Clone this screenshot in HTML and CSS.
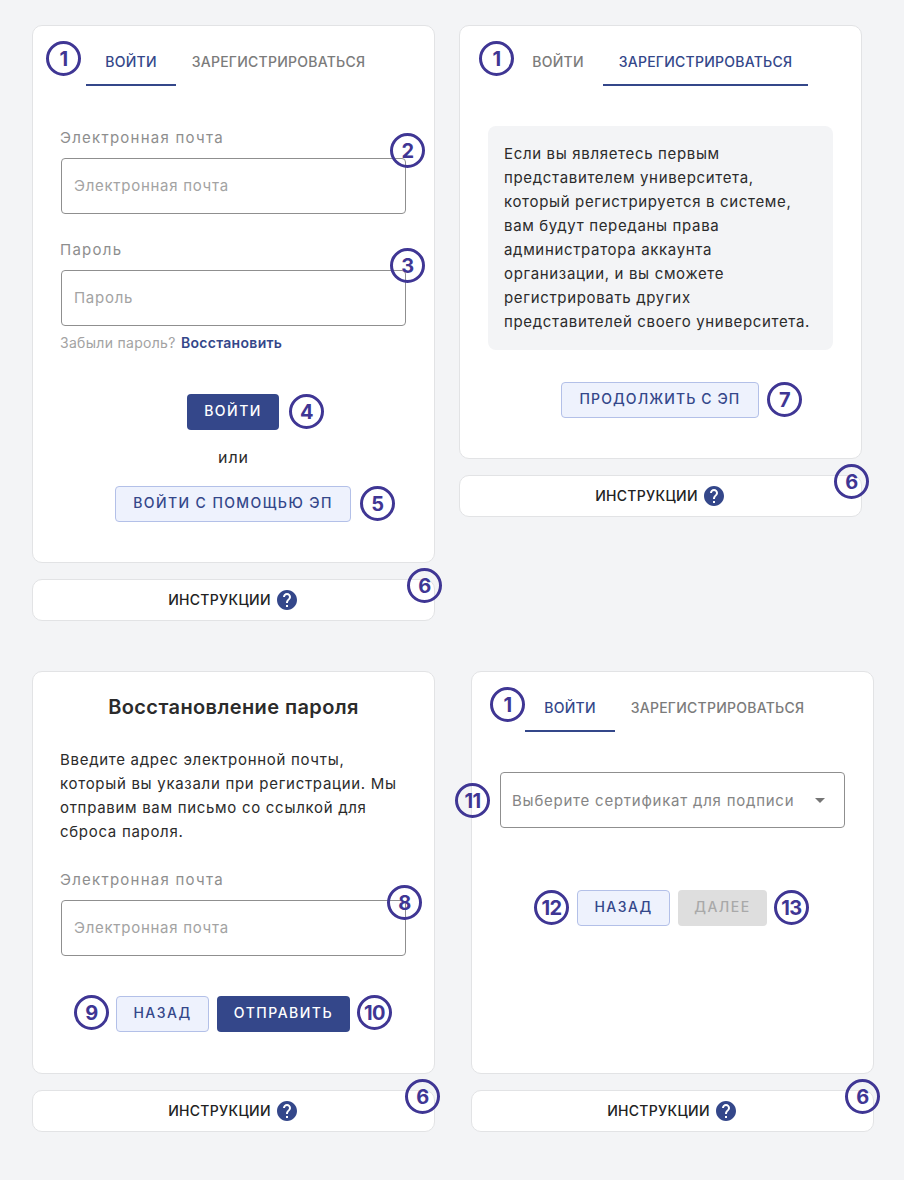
FILE: index.html
```html
<!DOCTYPE html>
<html lang="ru">
<head>
    <meta charset="UTF-8" />
    <meta name="viewport" content="width=device-width, initial-scale=1.0" />
    <title>Вход</title>
    <link rel="stylesheet" href="styles.css">
</head>
<body>
    <div class="sheet">
        <div class="row row-top">
            <div class="panel">
                <div class="card">
                    <div class="tabs">
                        <span class="tab tab-login active">Войти</span>
                        <span class="tab tab-register">Зарегистрироваться</span>
                    </div>
                    <form class="form form-login">
                        <label class="label">Электронная почта</label>
                        <input class="input" type="text" placeholder="Электронная почта">
                        <label class="label label-next">Пароль</label>
                        <input class="input" type="text" placeholder="Пароль">
                        <p class="forgot">Забыли пароль? <a class="forgot-link">Восстановить</a></p>
                        <div class="actions actions-login">
                            <button class="btn btn-primary btn-login" type="button">Войти</button>
                        </div>
                        <p class="or">или</p>
                        <div class="actions">
                            <button class="btn btn-soft btn-sign" type="button">Войти с помощью ЭП</button>
                        </div>
                    </form>
                </div>
                <div class="help"><span class="help-text">Инструкции</span>
                    <svg class="help-icon" viewBox="0 0 24 24"><path d="M12 2C6.48 2 2 6.48 2 12s4.48 10 10 10 10-4.48 10-10S17.52 2 12 2zm1 17h-2v-2h2v2zm2.07-7.75l-.9.92C13.45 12.9 13 13.5 13 15h-2v-.5c0-1.1.45-2.1 1.17-2.83l1.24-1.26c.37-.36.59-.86.59-1.41 0-1.1-.9-2-2-2s-2 .9-2 2H8c0-2.21 1.79-4 4-4s4 1.79 4 4c0 .88-.36 1.68-.93 2.25z"/></svg>
                </div>
                <span class="badge a1">1</span>
                <span class="badge a2">2</span>
                <span class="badge a3">3</span>
                <span class="badge a4">4</span>
                <span class="badge a5">5</span>
                <span class="badge a6">6</span>
            </div>

            <div class="panel">
                <div class="card">
                    <div class="tabs">
                        <span class="tab tab-login">Войти</span>
                        <span class="tab tab-register active">Зарегистрироваться</span>
                    </div>
                    <div class="form form-register">
                        <p class="note">Если вы являетесь первым<br>представителем университета,<br>который регистрируется в системе,<br>вам будут переданы права<br>администратора аккаунта<br>организации, и вы сможете<br>регистрировать других<br>представителей своего университета.</p>
                        <div class="actions actions-register">
                            <button class="btn btn-soft btn-continue" type="button">Продолжить с ЭП</button>
                        </div>
                    </div>
                </div>
                <div class="help"><span class="help-text">Инструкции</span>
                    <svg class="help-icon" viewBox="0 0 24 24"><path d="M12 2C6.48 2 2 6.48 2 12s4.48 10 10 10 10-4.48 10-10S17.52 2 12 2zm1 17h-2v-2h2v2zm2.07-7.75l-.9.92C13.45 12.9 13 13.5 13 15h-2v-.5c0-1.1.45-2.1 1.17-2.83l1.24-1.26c.37-.36.59-.86.59-1.41 0-1.1-.9-2-2-2s-2 .9-2 2H8c0-2.21 1.79-4 4-4s4 1.79 4 4c0 .88-.36 1.68-.93 2.25z"/></svg>
                </div>
                <span class="badge b1">1</span>
                <span class="badge b7">7</span>
                <span class="badge b6">6</span>
            </div>
        </div>

        <div class="row row-bottom">
            <div class="panel">
                <div class="card card-square">
                    <h2 class="title">Восстановление пароля</h2>
                    <form class="form">
                        <p class="text">Введите адрес электронной почты,<br>который вы указали при регистрации. Мы<br>отправим вам письмо со ссылкой для<br>сброса пароля.</p>
                        <label class="label label-next">Электронная почта</label>
                        <input class="input" type="text" placeholder="Электронная почта">
                        <div class="actions actions-reset">
                            <button class="btn btn-soft btn-back" type="button">Назад</button>
                            <button class="btn btn-primary btn-send" type="button">Отправить</button>
                        </div>
                    </form>
                </div>
                <div class="help"><span class="help-text">Инструкции</span>
                    <svg class="help-icon" viewBox="0 0 24 24"><path d="M12 2C6.48 2 2 6.48 2 12s4.48 10 10 10 10-4.48 10-10S17.52 2 12 2zm1 17h-2v-2h2v2zm2.07-7.75l-.9.92C13.45 12.9 13 13.5 13 15h-2v-.5c0-1.1.45-2.1 1.17-2.83l1.24-1.26c.37-.36.59-.86.59-1.41 0-1.1-.9-2-2-2s-2 .9-2 2H8c0-2.21 1.79-4 4-4s4 1.79 4 4c0 .88-.36 1.68-.93 2.25z"/></svg>
                </div>
                <span class="badge c8">8</span>
                <span class="badge c9">9</span>
                <span class="badge c10">10</span>
                <span class="badge c6">6</span>
            </div>

            <div class="panel">
                <div class="card card-square">
                    <div class="tabs">
                        <span class="tab tab-login active">Войти</span>
                        <span class="tab tab-register">Зарегистрироваться</span>
                    </div>
                    <div class="form form-cert">
                        <div class="select">
                            <span class="select-text">Выберите сертификат для подписи</span>
                            <span class="select-arrow"></span>
                        </div>
                        <div class="actions actions-cert">
                            <button class="btn btn-soft btn-back" type="button">Назад</button>
                            <button class="btn btn-disabled btn-next" type="button">Далее</button>
                        </div>
                    </div>
                </div>
                <div class="help"><span class="help-text">Инструкции</span>
                    <svg class="help-icon" viewBox="0 0 24 24"><path d="M12 2C6.48 2 2 6.48 2 12s4.48 10 10 10 10-4.48 10-10S17.52 2 12 2zm1 17h-2v-2h2v2zm2.07-7.75l-.9.92C13.45 12.9 13 13.5 13 15h-2v-.5c0-1.1.45-2.1 1.17-2.83l1.24-1.26c.37-.36.59-.86.59-1.41 0-1.1-.9-2-2-2s-2 .9-2 2H8c0-2.21 1.79-4 4-4s4 1.79 4 4c0 .88-.36 1.68-.93 2.25z"/></svg>
                </div>
                <span class="badge d1">1</span>
                <span class="badge d11">11</span>
                <span class="badge d12">12</span>
                <span class="badge d13">13</span>
                <span class="badge d6">6</span>
            </div>
        </div>
    </div>
</body>
</html>
```

FILE: styles.css
```css
* {
    box-sizing: border-box;
}
body {
    margin: 0;
    background-color: #f3f4f6;
    font-family: "Inter", "Noto Sans", sans-serif;
    color: #2b2b2b;
}
p, h2 {
    margin: 0;
}
.sheet {
    padding: 25px 0 0 32px;
}
.row {
    display: flex;
    align-items: flex-start;
}
.row-top {
    gap: 24px;
}
.row-bottom {
    gap: 36px;
    margin-top: 50px;
}
.panel {
    position: relative;
    width: 403px;
}
.card {
    background-color: #fff;
    border: 1px solid #e2e3e5;
    border-radius: 10px;
}
.card-square {
    height: 403px;
}

/* tabs */
.tabs {
    display: flex;
    margin: 12px 0 0 53px;
    height: 48px;
}
.tab {
    display: flex;
    align-items: center;
    justify-content: center;
    padding-top: 1px;
    text-transform: uppercase;
    font-size: 14px;
    font-weight: 500;
    letter-spacing: 0.25px;
    color: #7b7b7b;
    border-bottom: 2px solid transparent;
}
.tab-login {
    width: 90px;
}
.tab-register {
    width: 205px;
}
.tab.active {
    color: #34478a;
    border-bottom-color: #34478a;
}

/* form */
.form {
    display: flex;
    flex-direction: column;
    padding: 0 28px;
}
.form-login {
    margin-top: 42px;
    padding-bottom: 40px;
}
.form-register {
    margin-top: 40px;
    padding-bottom: 40px;
}
.form-cert {
    margin-top: 40px;
}
.label {
    margin-left: -1px;
    font-size: 15px;
    line-height: 20px;
    letter-spacing: 1.25px;
    color: #8e8e8e;
    margin-bottom: 10px;
}
.label-next {
    margin-top: 26px;
}
.input {
    width: 345px;
    height: 56px;
    padding: 0 12px 2px;
    border: 1px solid #8f8f8f;
    border-radius: 4px;
    background: #fff;
    font: inherit;
    font-size: 15px;
    letter-spacing: 0.72px;
}
.input::placeholder {
    color: #a3a3a3;
    opacity: 1;
}
.forgot {
    margin: 8px 0 0 -1px;
    font-size: 14px;
    line-height: 18px;
    letter-spacing: 0.3px;
    color: #a3a3a3;
}
.forgot-link {
    margin-left: 1px;
    color: #34478a;
    font-weight: 600;
}
.or {
    margin: 17px 0 19px;
    text-align: center;
    font-size: 16px;
    line-height: 20px;
    letter-spacing: 1px;
}
.actions {
    display: flex;
    justify-content: center;
    gap: 8px;
    margin-right: 1px;
}
.actions-login {
    margin-top: 42px;
}
.actions-register {
    margin-top: 32px;
}
.actions-reset {
    margin-top: 40px;
}
.actions-cert {
    margin-top: 62px;
}

/* buttons */
.btn {
    height: 36px;
    padding: 0 0 3px;
    border-radius: 4px;
    border: 1px solid transparent;
    font-family: inherit;
    font-size: 14px;
    font-weight: 500;
    letter-spacing: 1.5px;
    text-transform: uppercase;
}
.btn-primary {
    background-color: #34478a;
    color: #fff;
}
.btn-soft {
    background-color: #eef2fd;
    border-color: #b3c0e8;
    color: #34478a;
}
.btn-disabled {
    background-color: #dedede;
    color: #a9a9a9;
}
.btn-login {
    width: 92px;
}
.btn-sign {
    width: 236px;
    letter-spacing: 1.4px;
}
.btn-continue {
    width: 198px;
    letter-spacing: 1.1px;
}
.btn-back {
    width: 93px;
}
.btn-send {
    width: 133px;
}
.btn-next {
    width: 89px;
}

/* register note */
.note {
    padding: 16px;
    border-radius: 8px;
    background-color: #f3f4f6;
    font-size: 15px;
    line-height: 24px;
    letter-spacing: 0.66px;
}
.title {
    margin-top: 21px;
    text-align: center;
    font-size: 20px;
    line-height: 28px;
    font-weight: 600;
    letter-spacing: 0.4px;
}
.text {
    margin: 27px 0 0 -1px;
    font-size: 15px;
    line-height: 24px;
    letter-spacing: 0.7px;
}

/* select */
.select {
    display: flex;
    align-items: center;
    justify-content: space-between;
    width: 345px;
    height: 56px;
    padding: 0 19px 0 11px;
    border: 1px solid #8f8f8f;
    border-radius: 4px;
}
.select-text {
    font-size: 15px;
    letter-spacing: 0.76px;
    color: #858585;
}
.select-arrow {
    width: 0;
    height: 0;
    border-left: 5px solid transparent;
    border-right: 5px solid transparent;
    border-top: 5px solid #757575;
}

/* instructions bar */
.help {
    display: flex;
    align-items: center;
    justify-content: center;
    gap: 4px;
    height: 42px;
    margin-top: 16px;
    background-color: #fff;
    border: 1px solid #e2e3e5;
    border-radius: 10px;
    text-transform: uppercase;
    font-size: 14px;
    font-weight: 500;
    letter-spacing: 0.3px;
    color: #222;
}
.help-text {
    margin-bottom: 2px;
}
.help-icon {
    width: 24px;
    height: 24px;
    fill: #34478a;
}

/* numbered callouts laid over the screenshot */
.badge {
    position: absolute;
    display: flex;
    align-items: center;
    justify-content: center;
    width: 35px;
    height: 35px;
    border: 3px solid #3f3694;
    border-radius: 50%;
    background-color: transparent;
    color: #3f3694;
    font-size: 20px;
    font-weight: 700;
    letter-spacing: -0.5px;
}
.a1 { left: 14px; top: 16px; }
.a2 { left: 358px; top: 108px; }
.a3 { left: 358px; top: 223px; }
.a4 { left: 257px; top: 369px; }
.a5 { left: 328px; top: 461px; }
.a6 { left: 375px; top: 543px; }
.b1 { left: 20px; top: 16px; }
.b7 { left: 308px; top: 357px; }
.b6 { left: 375px; top: 439px; }
.c8 { left: 355px; top: 214px; }
.c9 { left: 42px; top: 324px; }
.c10 { left: 325px; top: 324px; }
.c6 { left: 373px; top: 408px; }
.d1 { left: 19px; top: 16px; }
.d11 { left: -16px; top: 112px; }
.d12 { left: 63px; top: 219px; }
.d13 { left: 303px; top: 219px; }
.d6 { left: 374px; top: 408px; }
```
